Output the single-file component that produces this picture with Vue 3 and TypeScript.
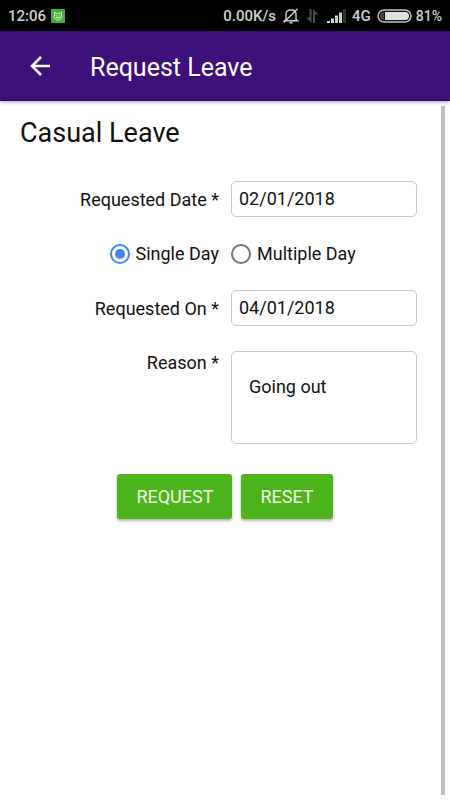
<script setup lang="ts">
import { reactive } from 'vue'

interface LeaveRequest {
  requestedDate: string
  duration: 'single' | 'multiple'
  requestedOn: string
  reason: string
}

const initial: LeaveRequest = {
  requestedDate: '02/01/2018',
  duration: 'single',
  requestedOn: '04/01/2018',
  reason: 'Going out',
}

const form = reactive<LeaveRequest>({ ...initial })

function reset(): void {
  Object.assign(form, initial)
}
</script>

<template>
  <div class="screen">
    <div class="status">
      <div class="status-group">
        <span>12:06</span>
        <svg class="app-badge" viewBox="0 0 14 14" width="14" height="14" aria-hidden="true">
          <rect width="14" height="14" rx="1" fill="#43ad3c" />
          <path d="M3.4 6.2 3.6 3l2 1.3h2.8l2-1.3.2 3.2c1 2.6-.6 4.800-3.600 4.800S2.400 8.800 3.400 6.200Z" fill="#55b54e" stroke="#c8ecc4" />
          <path d="M4.600 6.800h1.400M8 6.800h1.400M4.800 8.500h4.400" fill="none" stroke="#c8ecc4" />
        </svg>
      </div>
      <div class="status-group">
        <span class="speed">0.00K/s</span>
        <svg viewBox="0 0 16 16" width="16" height="16" fill="none" stroke="#d0d0d0" stroke-width="1.4" aria-hidden="true">
          <path d="M3 11.500V6c0-2.500 2-4 5-4s5 1.500 5 4v5.500l1.500 1.200H1.500L3 11.500M6.500 14.800h3M1 14.200 14.500.8" />
        </svg>
        <svg class="transfer" viewBox="0 0 14 16" width="14" height="16" fill="#4c4c4c" aria-hidden="true">
          <path d="M4.500 1h2v14L1 9.500h3.500ZM8 15V1l5.500 5.500H10V15Z" />
        </svg>
        <svg class="signal" viewBox="0 0 19 14" width="19" height="14" fill="#d0d0d0" aria-hidden="true">
          <path d="M0 12h3v2H0ZM4 9.500h3V14H4ZM8 6.500h3V14H8ZM12 3.500h3V14h-3Z" />
          <path d="M16 0h3v14h-3Z" fill="#303030" />
        </svg>
        <span class="network">4G</span>
        <svg class="battery" viewBox="0 0 35 14" width="35" height="14" aria-hidden="true">
          <rect x="1" y="1" width="33" height="12" rx="6" fill="#111" stroke="#bdbdbd" stroke-width="1.5" />
          <path d="M8 3h20a4 4 0 0 1 0 8H8Z" fill="#dedede" />
          <path d="M7 3a4 4 0 0 0 0 8Z" fill="#444" />
        </svg>
        <span class="percent">81%</span>
      </div>
    </div>

    <header class="toolbar">
      <button class="back" type="button" aria-label="Back">
        <svg viewBox="0 0 20 20" width="20" height="20" fill="none" stroke="#fff" stroke-width="2.5" aria-hidden="true">
          <path d="M20 10H2M11 1 2 10l9 9" />
        </svg>
      </button>
      <h1>Request Leave</h1>
    </header>

    <main class="content">
      <h2>Casual Leave</h2>
      <form @submit.prevent>
        <div class="fields">
          <label for="requested-date">Requested Date *</label>
          <input id="requested-date" v-model="form.requestedDate" class="box" type="text" />

          <label class="choice"><input v-model="form.duration" type="radio" name="duration" value="single" />Single Day</label>
          <label class="choice choice-end"><input v-model="form.duration" type="radio" name="duration" value="multiple" />Multiple Day</label>

          <label for="requested-on">Requested On *</label>
          <input id="requested-on" v-model="form.requestedOn" class="box" type="text" />

          <label class="top" for="reason">Reason *</label>
          <textarea id="reason" v-model="form.reason" class="box"></textarea>
        </div>
        <div class="actions">
          <button type="submit">REQUEST</button>
          <button type="button" @click="reset">RESET</button>
        </div>
      </form>
      <div class="scrollbar"></div>
    </main>
  </div>
</template>

<style>
body {
  background: #fff;
}
</style>

<style scoped>
.screen {
  display: flex;
  flex-direction: column;
  min-height: 100vh;
  font-family: Roboto, 'Liberation Sans', sans-serif;
  font-size: 18px;
  color: #111;
}

.screen *,
.screen {
  box-sizing: border-box;
}

.status {
  display: flex;
  justify-content: space-between;
  align-items: center;
  height: 31px;
  padding: 0 8px;
  background: #000;
  color: #d0d0d0;
  font-size: 15px;
  font-weight: 500;
}

.status-group {
  display: flex;
  align-items: center;
}

.status svg {
  flex: none;
}

.app-badge {
  margin-left: 5px;
}

.speed {
  margin-right: 7px;
}

.transfer {
  margin-left: 6px;
}

.signal {
  margin-left: 8px;
}

.network {
  margin-left: 6px;
}

.battery {
  margin: 0 4px 0 6px;
}

.percent {
  font-size: 14px;
}

.toolbar {
  position: relative;
  display: flex;
  align-items: center;
  height: 70px;
  padding: 0 20px;
  background: #3f0f7a;
  border-bottom: 1px solid #2a0663;
  box-shadow: 0 1px 4px rgba(50, 20, 90, 0.4);
  color: #fff;
}

.back {
  display: flex;
  align-items: center;
  justify-content: center;
  width: 40px;
  height: 40px;
  padding: 0;
  border: 0;
  background: none;
}

h1,
h2 {
  margin: 0;
  font-weight: 400;
}

h1 {
  margin-left: 30px;
  padding-top: 4px;
  font-size: 25px;
  line-height: 32px;
}

.content {
  position: relative;
  flex: 1;
  padding: 16px 33px 24px 20px;
}

h2 {
  font-size: 27px;
  line-height: 32px;
}

.fields {
  display: grid;
  grid-template-columns: 199fr 186fr;
  grid-template-rows: 36px 23px 36px 93px;
  align-items: center;
  gap: 25px 12px;
  margin-top: 32px;
}

.fields label {
  justify-self: end;
  line-height: 23px;
}

.fields .top {
  align-self: start;
}

.choice {
  display: flex;
  align-items: center;
  gap: 6px;
  white-space: nowrap;
}

.fields .choice-end {
  justify-self: start;
}

.choice input {
  display: grid;
  place-items: center;
  appearance: none;
  width: 20px;
  height: 20px;
  margin: 0;
  border: 2px solid #757575;
  border-radius: 50%;
}

.choice input:checked {
  border-color: #4285f4;
}

.choice input:checked::before {
  content: '';
  width: 10px;
  height: 10px;
  border-radius: 50%;
  background: #4285f4;
}

.box {
  width: 100%;
  height: 100%;
  min-width: 0;
  margin: 0;
  padding: 0 7px 2px;
  border: 1px solid #c8c8c8;
  border-radius: 5px;
  background: #fff;
  color: #111;
  font: inherit;
}

textarea.box {
  padding: 23px 17px;
  line-height: 23px;
  resize: none;
}

.actions {
  display: flex;
  justify-content: center;
  gap: 9px;
  margin: 30px -13px 0 0;
}

.actions button {
  height: 45px;
  padding: 0 19px;
  border: 0;
  border-radius: 3px;
  background: #4db51b;
  box-shadow: 0 2px 3px rgba(0, 0, 0, 0.3);
  color: #f0fbe9;
  font: inherit;
}

.scrollbar {
  position: absolute;
  top: 5px;
  right: 5px;
  bottom: 5px;
  width: 4px;
  background: #c0c0c0;
}
</style>
